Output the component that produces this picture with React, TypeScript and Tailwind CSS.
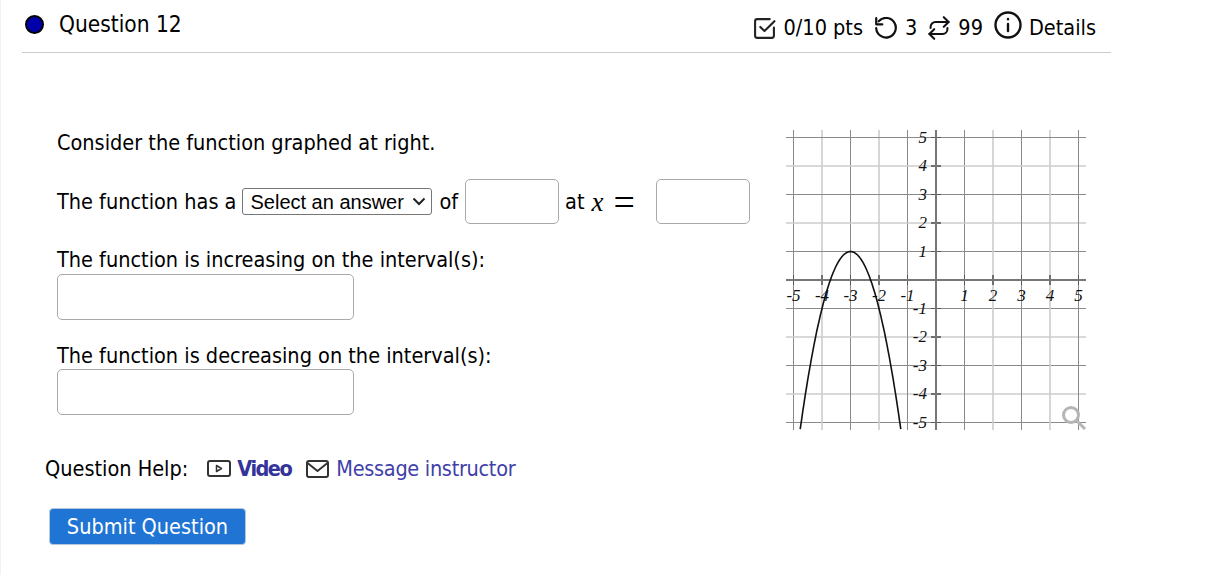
const xTicks = [-5, -4, -3, -2, -1, 0, 1, 2, 3, 4, 5];
const px = (v: number) => 150 + v * 28.5;
const py = (v: number) => 150 - v * 28.5;

// parabola y = 1 - 2(x + 3)^2, stops at the bottom of the graph box
const curve = Array.from({ length: 81 }, (_, i) => {
  const x = -4.765 + (i / 80) * 3.53;
  return `${px(x).toFixed(1)},${py(1 - 2 * (x + 3) * (x + 3)).toFixed(1)}`;
}).join(' ');

function Graph() {
  return (
    <svg width="300" height="300" viewBox="0 0 300 300" className="block shrink-0 overflow-visible">
      {xTicks.map((t) => {
        const even = t % 2 === 0;
        const stroke = even ? '#cccccc' : '#8a8a8a';
        const w = even ? 1.6 : 1;
        return (
          <g key={t}>
            {t !== 0 && <line x1={px(t)} x2={px(t)} y1={0} y2={300} stroke={stroke} strokeWidth={w} />}
            {t !== 0 && <line x1={0} x2={300} y1={py(t)} y2={py(t)} stroke={stroke} strokeWidth={w} />}
            {t !== 0 && <line x1={px(t)} x2={px(t)} y1={145} y2={155} stroke="#555555" strokeWidth={w} />}
            {t !== 0 && <line x1={145} x2={155} y1={py(t)} y2={py(t)} stroke="#555555" strokeWidth={w} />}
          </g>
        );
      })}
      <line x1={0} x2={300} y1={150} y2={150} stroke="#777777" strokeWidth={2} />
      <line x1={150} x2={150} y1={0} y2={300} stroke="#777777" strokeWidth={2} />
      <polyline points={curve} fill="none" stroke="#111111" strokeWidth={1.6} />
      <g fontFamily="'Liberation Serif', serif" fontStyle="italic" fontSize="17" fill="#111111">
        {xTicks.filter((t) => t !== 0).map((t) => (
          <text key={`x${t}`} x={px(t)} y={171} textAnchor="middle">{t}</text>
        ))}
        {xTicks.filter((t) => t !== 0).map((t) => (
          <text key={`y${t}`} x={141} y={py(t) + 5} textAnchor="end">{t}</text>
        ))}
      </g>
      <circle cx={285} cy={285} r={7.5} fill="none" stroke="#b5b5b5" strokeWidth={3} />
      <line x1={291} y1={291} x2={299} y2={299} stroke="#b5b5b5" strokeWidth={3} />
    </svg>
  );
}

export default function App() {
  return (
    <div className="h-[575px] w-[1218px] overflow-hidden border-l border-[#f2f2f2] bg-white text-[21.5px] leading-[26px] text-black [font-family:'DejaVu_Sans_Condensed','DejaVu_Sans',sans-serif] [font-stretch:condensed]">
      <div className="ml-[21px] w-[1089px]">
        <header className="flex h-[53px] items-start border-b border-[#cccccc]">
          <span className="ml-[3px] mt-[15px] h-[19px] w-[19px] rounded-full border-2 border-black bg-[#0000aa]" />
          <h1 className="ml-[15px] mt-[11px] text-[22.5px] font-medium">Question 12</h1>
          <div className="ml-auto mr-[15px] mt-[15px] flex items-center">
            <svg width="23" height="23" viewBox="0 0 22 22" fill="none" stroke="#222222" strokeWidth="2" strokeLinecap="round" strokeLinejoin="round">
              <path d="M20 10v8a2 2 0 0 1-2 2H4a2 2 0 0 1-2-2V4a2 2 0 0 1 2-2h12" />
              <path d="M7 9.5l4 4 9.5-9.5" />
            </svg>
            <span className="ml-[8px]">0/10 pts</span>
            <svg className="ml-[12px]" width="22" height="22" viewBox="2 2 18 18" fill="none" stroke="#111111" strokeWidth="1.8" strokeLinecap="round" strokeLinejoin="round">
              <path d="M5 5.5A8 8 0 1 1 3 11" />
              <path d="M3 3v5h5" />
            </svg>
            <span className="ml-[8px]">3</span>
            <svg className="ml-[11px]" width="22" height="24" viewBox="2 1 18 20" fill="none" stroke="#111111" strokeWidth="1.7" strokeLinecap="round" strokeLinejoin="round">
              <path d="M15 2l4 4-4 4" />
              <path d="M19 6H8a4 4 0 0 0-4 4v1" />
              <path d="M7 20l-4-4 4-4" />
              <path d="M3 16h11a4 4 0 0 0 4-4v-1" />
            </svg>
            <span className="ml-[8px]">99</span>
            <svg className="ml-[10px] -mt-[7px]" width="30" height="30" viewBox="0 0 30 30" fill="none" stroke="#111111" strokeWidth="2.4" strokeLinecap="round">
              <circle cx="15" cy="15" r="12.5" />
              <path d="M15 14v7" />
              <path d="M15 9v.2" />
            </svg>
            <span className="ml-[6px]">Details</span>
          </div>
        </header>

        <div className="flex">
          <div className="w-[764px] shrink-0 pl-[35px] pt-[77px]">
            <p className="h-[26px]">Consider the function graphed at right.</p>
            <div className="mt-[23px] flex h-[45px] items-center">
              <span>The function has a</span>
              <div className="ml-[6px] flex h-[27px] w-[190px] items-center justify-between rounded-[3px] border border-[#767676] bg-white pl-[7px] pr-[5px] text-[20px] [font-family:'Liberation_Sans',sans-serif] [font-stretch:normal]">
                <span>Select an answer</span>
                <svg width="14" height="9" viewBox="0 0 14 9" fill="none" stroke="#222222" strokeWidth="2">
                  <path d="M1.5 1.5l5.5 5.5 5.5-5.5" />
                </svg>
              </div>
              <span className="ml-[7px]">of</span>
              <div className="ml-[7px] h-[45px] w-[94px] rounded-[5px] border border-[#aaaaaa]" />
              <span className="ml-[6px]">at</span>
              <span className="ml-[7px] text-[27px] [font-family:'Liberation_Serif',serif] italic">x</span>
              <span className="ml-[10px] text-[38px] [font-family:'Liberation_Serif',serif]">=</span>
              <div className="ml-[21px] h-[45px] w-[94px] rounded-[5px] border border-[#aaaaaa]" />
            </div>
            <p className="mt-[23px] h-[26px]">The function is increasing on the interval(s):</p>
            <div className="mt-[1px] h-[46px] w-[297px] rounded-[5px] border border-[#aaaaaa]" />
            <p className="mt-[23px] h-[26px]">The function is decreasing on the interval(s):</p>
            <div className="h-[46px] w-[297px] rounded-[5px] border border-[#aaaaaa]" />
          </div>
          <div className="pt-[77px]">
            <Graph />
          </div>
        </div>

        <div className="ml-[23px] mt-[26px] flex h-[26px] items-center">
          <span>Question Help:</span>
          <svg className="ml-[19px]" width="24" height="18" viewBox="0 0 24 18" fill="none" stroke="#333333" strokeWidth="2" strokeLinejoin="round">
            <rect x="1" y="1" width="22" height="15" rx="2" />
            <path d="M9.5 5.5l5 3-5 3z" strokeWidth="1.5" />
          </svg>
          <span className="ml-[6px] font-bold tracking-[-1.5px] text-[#333399]">Video</span>
          <svg className="ml-[15px]" width="23" height="18" viewBox="0 0 23 18" fill="none" stroke="#333333" strokeWidth="2" strokeLinejoin="round">
            <rect x="1" y="1" width="21" height="16" rx="2" />
            <path d="M1.5 3l10 8 10-8" />
          </svg>
          <span className="ml-[7px] tracking-[-0.3px] text-[#4040aa]">Message instructor</span>
        </div>

        <button className="ml-[27px] mt-[26px] flex h-[37px] w-[197px] items-center justify-center rounded-[4px] border border-[#b5c7dd] bg-[#1f74d4] text-white">
          Submit Question
        </button>
      </div>
    </div>
  );
}
